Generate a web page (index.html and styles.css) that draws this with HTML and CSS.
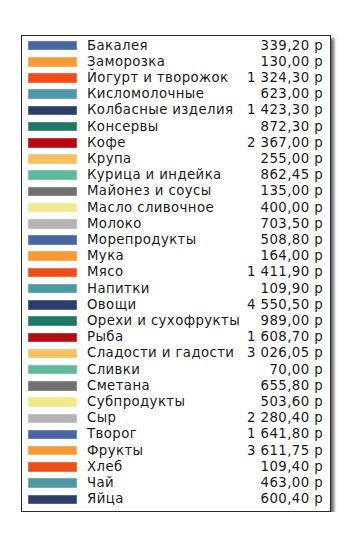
FILE: index.html
```html
<!DOCTYPE html>
<html lang="ru">
<head>
<meta charset="utf-8">
<link rel="stylesheet" href="styles.css">
</head>
<body>
<div class="legend">
  <div class="row"><span class="sw c1"></span><span class="name">Бакалея</span><span class="val">339,20 р</span></div>
  <div class="row"><span class="sw c2"></span><span class="name">Заморозка</span><span class="val">130,00 р</span></div>
  <div class="row"><span class="sw c3"></span><span class="name">Йогурт и творожок</span><span class="val">1 324,30 р</span></div>
  <div class="row"><span class="sw c4"></span><span class="name">Кисломолочные</span><span class="val">623,00 р</span></div>
  <div class="row"><span class="sw c5"></span><span class="name">Колбасные изделия</span><span class="val">1 423,30 р</span></div>
  <div class="row"><span class="sw c6"></span><span class="name">Консервы</span><span class="val">872,30 р</span></div>
  <div class="row"><span class="sw c7"></span><span class="name">Кофе</span><span class="val">2 367,00 р</span></div>
  <div class="row"><span class="sw c8"></span><span class="name">Крупа</span><span class="val">255,00 р</span></div>
  <div class="row"><span class="sw c9"></span><span class="name">Курица и индейка</span><span class="val">862,45 р</span></div>
  <div class="row"><span class="sw c10"></span><span class="name">Майонез и соусы</span><span class="val">135,00 р</span></div>
  <div class="row"><span class="sw c11"></span><span class="name">Масло сливочное</span><span class="val">400,00 р</span></div>
  <div class="row"><span class="sw c12"></span><span class="name">Молоко</span><span class="val">703,50 р</span></div>
  <div class="row"><span class="sw c1"></span><span class="name">Морепродукты</span><span class="val">508,80 р</span></div>
  <div class="row"><span class="sw c2"></span><span class="name">Мука</span><span class="val">164,00 р</span></div>
  <div class="row"><span class="sw c3"></span><span class="name">Мясо</span><span class="val">1 411,90 р</span></div>
  <div class="row"><span class="sw c4"></span><span class="name">Напитки</span><span class="val">109,90 р</span></div>
  <div class="row"><span class="sw c5"></span><span class="name">Овощи</span><span class="val">4 550,50 р</span></div>
  <div class="row"><span class="sw c6"></span><span class="name">Орехи и сухофрукты</span><span class="val">989,00 р</span></div>
  <div class="row"><span class="sw c7"></span><span class="name">Рыба</span><span class="val">1 608,70 р</span></div>
  <div class="row"><span class="sw c8"></span><span class="name">Сладости и гадости</span><span class="val">3 026,05 р</span></div>
  <div class="row"><span class="sw c9"></span><span class="name">Сливки</span><span class="val">70,00 р</span></div>
  <div class="row"><span class="sw c10"></span><span class="name">Сметана</span><span class="val">655,80 р</span></div>
  <div class="row"><span class="sw c11"></span><span class="name">Субпродукты</span><span class="val">503,60 р</span></div>
  <div class="row"><span class="sw c12"></span><span class="name">Сыр</span><span class="val">2 280,40 р</span></div>
  <div class="row"><span class="sw c1"></span><span class="name">Творог</span><span class="val">1 641,80 р</span></div>
  <div class="row"><span class="sw c2"></span><span class="name">Фрукты</span><span class="val">3 611,75 р</span></div>
  <div class="row"><span class="sw c3"></span><span class="name">Хлеб</span><span class="val">109,40 р</span></div>
  <div class="row"><span class="sw c4"></span><span class="name">Чай</span><span class="val">463,00 р</span></div>
  <div class="row"><span class="sw c5"></span><span class="name">Яйца</span><span class="val">600,40 р</span></div>
</div>
</body>
</html>
```
FILE: styles.css
```css
html, body {
  margin: 0;
  padding: 0;
  background: #ffffff;
}
body {
  padding: 35px 0 0 21px;
  font-family: "DejaVu Sans", Verdana, sans-serif;
  font-size: 13.3px;
  letter-spacing: 0.4px;
  color: #1a1a1a;
}
.legend {
  box-sizing: border-box;
  width: 310px;
  height: 477px;
  border: 1px solid #2a2a2a;
  background: #fff;
  box-shadow: 3px 3px 3px rgba(0, 0, 0, 0.6);
  padding: 1.5px 7px 0 6px;
}
.row {
  display: grid;
  grid-template-columns: 49px 1fr auto;
  align-items: center;
  column-gap: 10px;
  height: 16.21px;
  line-height: 16.21px;
  white-space: nowrap;
}
.sw {
  display: block;
  height: 9.5px;
  box-shadow: inset 0 0 0 0.5px rgba(255, 255, 255, 0.4);
}
.val { text-align: right; }
.c1 { background: #4766a3; }
.c2 { background: #f49b38; }
.c3 { background: #f04d1a; }
.c4 { background: #4e98a6; }
.c5 { background: #2c3e69; }
.c6 { background: #1f7862; }
.c7 { background: #b50912; }
.c8 { background: #f4c261; }
.c9 { background: #5fb99c; }
.c10 { background: #707070; }
.c11 { background: #f3e98c; }
.c12 { background: #b4b4b4; }
```
